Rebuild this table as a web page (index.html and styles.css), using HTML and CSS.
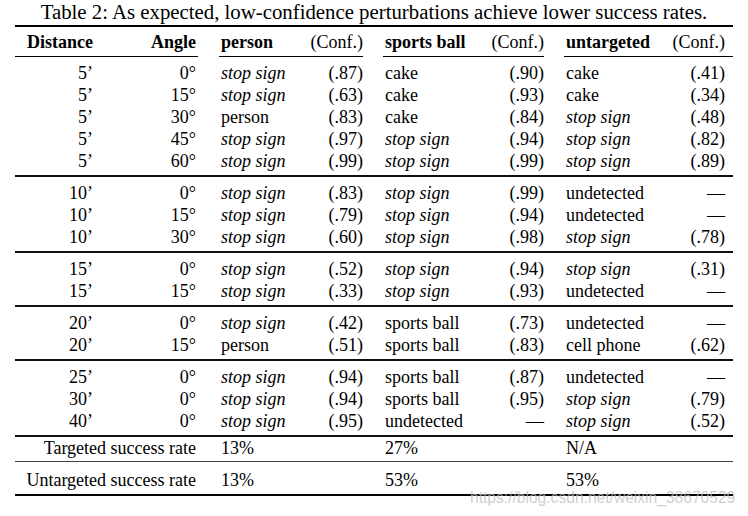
FILE: index.html
```html
<!DOCTYPE html>
<html lang="en">
<head>
<meta charset="utf-8">
<title>Table 2</title>
<link rel="stylesheet" href="styles.css">
</head>
<body>
<div class="page">
  <table class="results">
    <caption>Table 2: As expected, low-confidence perturbations achieve lower success rates.</caption>
    <colgroup>
      <col class="c1"><col class="c2"><col class="c3"><col class="c4"><col class="c5"><col class="c6"><col class="c7"><col class="c8">
    </colgroup>
    <thead>
      <tr>
        <th class="num rule-full">Distance</th>
        <th class="num angle rule-trim-r">Angle</th>
        <th class="txt rule-trim-l">person</th>
        <th class="num conf rule-trim-r">(Conf.)</th>
        <th class="txt rule-trim-l">sports ball</th>
        <th class="num conf rule-trim-r">(Conf.)</th>
        <th class="txt rule-trim-l">untargeted</th>
        <th class="num conf last rule-full">(Conf.)</th>
      </tr>
    </thead>
    <tbody class="block">
      <tr><td class="num">5’</td><td class="num angle">0°</td><td><i>stop sign</i></td><td class="num">(.87)</td><td>cake</td><td class="num">(.90)</td><td>cake</td><td class="num last">(.41)</td></tr>
      <tr><td class="num">5’</td><td class="num angle">15°</td><td><i>stop sign</i></td><td class="num">(.63)</td><td>cake</td><td class="num">(.93)</td><td>cake</td><td class="num last">(.34)</td></tr>
      <tr><td class="num">5’</td><td class="num angle">30°</td><td>person</td><td class="num">(.83)</td><td>cake</td><td class="num">(.84)</td><td><i>stop sign</i></td><td class="num last">(.48)</td></tr>
      <tr><td class="num">5’</td><td class="num angle">45°</td><td><i>stop sign</i></td><td class="num">(.97)</td><td><i>stop sign</i></td><td class="num">(.94)</td><td><i>stop sign</i></td><td class="num last">(.82)</td></tr>
      <tr><td class="num">5’</td><td class="num angle">60°</td><td><i>stop sign</i></td><td class="num">(.99)</td><td><i>stop sign</i></td><td class="num">(.99)</td><td><i>stop sign</i></td><td class="num last">(.89)</td></tr>
    </tbody>
    <tbody class="block">
      <tr><td class="num">10’</td><td class="num angle">0°</td><td><i>stop sign</i></td><td class="num">(.83)</td><td><i>stop sign</i></td><td class="num">(.99)</td><td>undetected</td><td class="num last">—</td></tr>
      <tr><td class="num">10’</td><td class="num angle">15°</td><td><i>stop sign</i></td><td class="num">(.79)</td><td><i>stop sign</i></td><td class="num">(.94)</td><td>undetected</td><td class="num last">—</td></tr>
      <tr><td class="num">10’</td><td class="num angle">30°</td><td><i>stop sign</i></td><td class="num">(.60)</td><td><i>stop sign</i></td><td class="num">(.98)</td><td><i>stop sign</i></td><td class="num last">(.78)</td></tr>
    </tbody>
    <tbody class="block">
      <tr><td class="num">15’</td><td class="num angle">0°</td><td><i>stop sign</i></td><td class="num">(.52)</td><td><i>stop sign</i></td><td class="num">(.94)</td><td><i>stop sign</i></td><td class="num last">(.31)</td></tr>
      <tr><td class="num">15’</td><td class="num angle">15°</td><td><i>stop sign</i></td><td class="num">(.33)</td><td><i>stop sign</i></td><td class="num">(.93)</td><td>undetected</td><td class="num last">—</td></tr>
    </tbody>
    <tbody class="block">
      <tr><td class="num">20’</td><td class="num angle">0°</td><td><i>stop sign</i></td><td class="num">(.42)</td><td>sports ball</td><td class="num">(.73)</td><td>undetected</td><td class="num last">—</td></tr>
      <tr><td class="num">20’</td><td class="num angle">15°</td><td>person</td><td class="num">(.51)</td><td>sports ball</td><td class="num">(.83)</td><td>cell phone</td><td class="num last">(.62)</td></tr>
    </tbody>
    <tbody class="block">
      <tr><td class="num">25’</td><td class="num angle">0°</td><td><i>stop sign</i></td><td class="num">(.94)</td><td>sports ball</td><td class="num">(.87)</td><td>undetected</td><td class="num last">—</td></tr>
      <tr><td class="num">30’</td><td class="num angle">0°</td><td><i>stop sign</i></td><td class="num">(.94)</td><td>sports ball</td><td class="num">(.95)</td><td><i>stop sign</i></td><td class="num last">(.79)</td></tr>
      <tr><td class="num">40’</td><td class="num angle">0°</td><td><i>stop sign</i></td><td class="num">(.95)</td><td>undetected</td><td class="num">—</td><td><i>stop sign</i></td><td class="num last">(.52)</td></tr>
    </tbody>
    <tbody class="summary">
      <tr class="targeted"><td class="num angle" colspan="2">Targeted success rate</td><td colspan="2">13%</td><td colspan="2">27%</td><td colspan="2">N/A</td></tr>
      <tr class="untargeted"><td class="num angle" colspan="2">Untargeted success rate</td><td colspan="2">13%</td><td colspan="2">53%</td><td colspan="2">53%</td></tr>
    </tbody>
  </table>
  <span class="watermark">https://blog.csdn.net/weixin_38670529</span>
</div>
</body>
</html>
```
FILE: styles.css
```css
html, body {
  margin: 0;
  padding: 0;
  background: #fff;
}

body {
  font-family: "Liberation Serif", "Times New Roman", serif;
  font-size: 18px;
  color: #000;
}

.page {
  position: relative;
  width: 748px;
  height: 516px;
  overflow: hidden;
}

.results {
  margin-left: 15px;
  width: 718px;
  table-layout: fixed;
  border-collapse: collapse;
  border-bottom: 2px solid #000;
}

.results caption {
  font-size: 20.8px;
  line-height: 22px;
  padding: 1px 0 2px;
  white-space: nowrap;
}

.c1 { width: 89px; }
.c2 { width: 106px; }
.c3 { width: 85px; }
.c4 { width: 79px; }
.c5 { width: 101px; }
.c6 { width: 80px; }
.c7 { width: 102px; }
.c8 { width: 76px; }

.results th,
.results td {
  padding: 0 11px;
  line-height: 22px;
  white-space: nowrap;
  text-align: left;
  vertical-align: middle;
}

.results th.num,
.results td.num {
  text-align: right;
}

.results th.angle,
.results td.angle {
  padding-right: 14px;
}

.results th.last,
.results td.last {
  padding-right: 8px;
}

.results thead tr {
  border-top: 2px solid #000;
}

.results th {
  padding-top: 4px;
  padding-bottom: 4px;
  font-weight: bold;
  background-image: linear-gradient(#000, #000);
  background-repeat: no-repeat;
}

.results th.conf {
  font-weight: normal;
}

.rule-full {
  background-size: 100% 1px;
  background-position: left bottom;
}

.rule-trim-r {
  background-size: calc(100% - 11px) 1px;
  background-position: left bottom;
}

.results th.angle.rule-trim-r {
  background-size: calc(100% - 12px) 1px;
}

.rule-trim-l {
  background-size: calc(100% - 9px) 1px;
  background-position: right bottom;
}

.results tbody.block + tbody,
.results tbody.block + tbody.summary {
  border-top: 2px solid #111;
}

.results tbody.block tr:first-child td {
  padding-top: 5px;
}

.results tbody.block tr:last-child td {
  padding-bottom: 3px;
}

.results tr.targeted td {
  padding-top: 0;
  padding-bottom: 2px;
}

.results tr.untargeted {
  border-top: 1px solid #444;
}

.results tr.untargeted td {
  padding-top: 7px;
  padding-bottom: 3px;
}

.watermark {
  position: absolute;
  left: 470px;
  top: 489px;
  font-family: "Liberation Sans", Arial, sans-serif;
  font-size: 15.6px;
  line-height: 18px;
  color: rgba(190, 190, 190, 0.75);
  white-space: nowrap;
}
```
